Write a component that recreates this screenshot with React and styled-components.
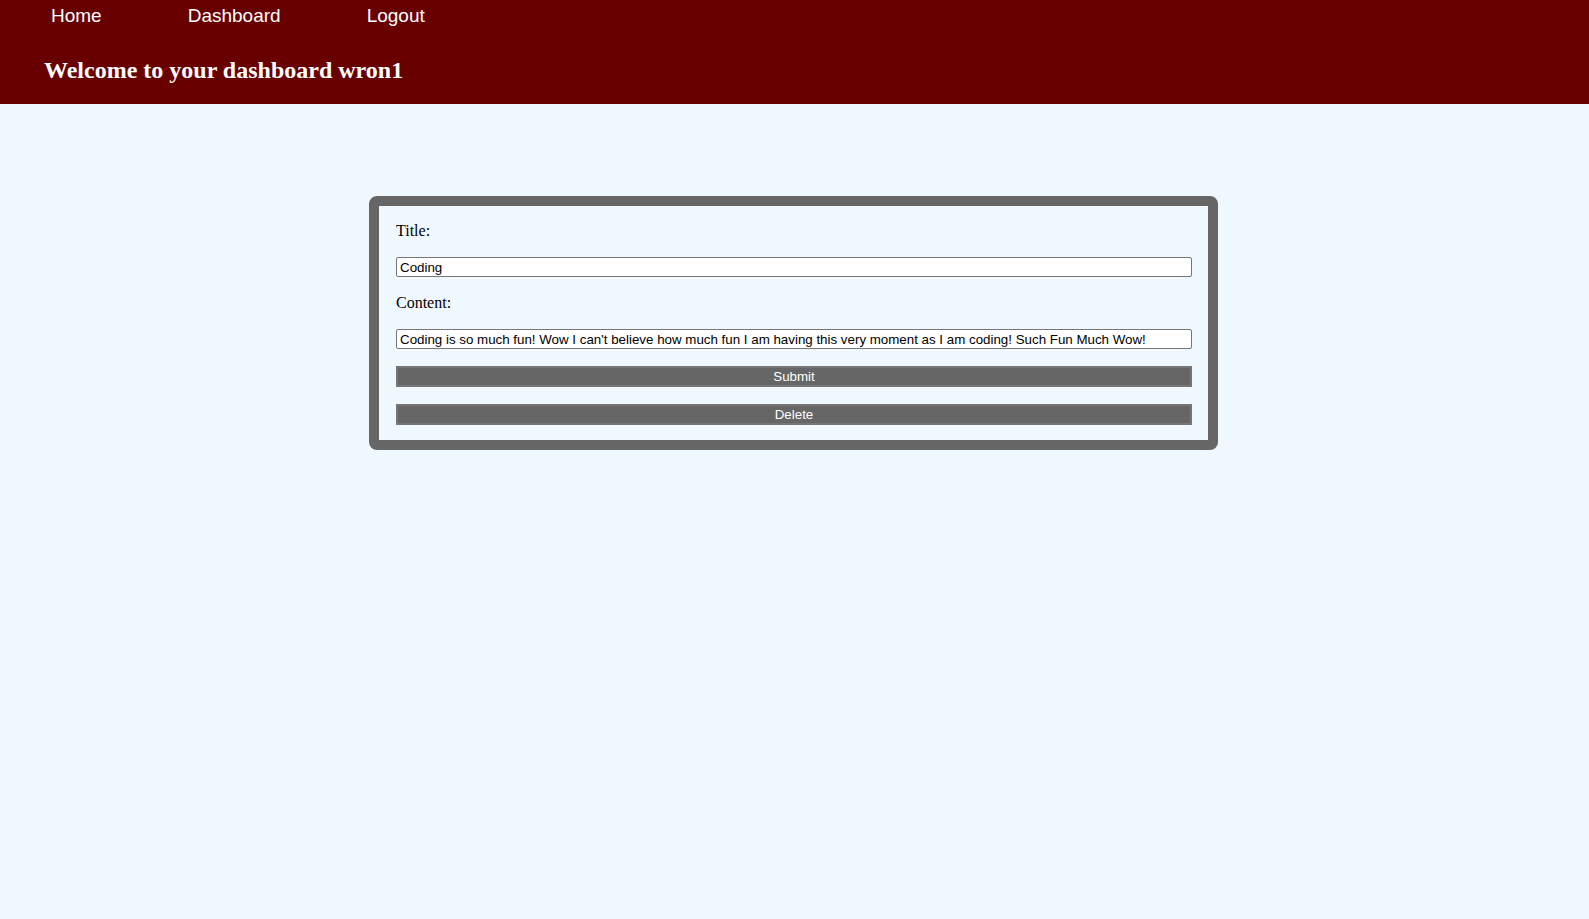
import styled, { createGlobalStyle } from 'styled-components';

const GlobalStyle = createGlobalStyle`
	html, body {
		margin: 0;
		padding: 0;
		background: #f0f8ff;
		font-family: 'Liberation Serif', 'Times New Roman', serif;
	}
	#root {
		min-height: 100vh;
	}
`;

const App = () => {
	return (
		<>
			<GlobalStyle />
			<StyledHeader>
				<StyledNav>
					<StyledLink href='#'>Home</StyledLink>
					<StyledLink href='#'>Dashboard</StyledLink>
					<StyledLink href='#'>Logout</StyledLink>
				</StyledNav>
				<StyledWelcome>Welcome to your dashboard wron1</StyledWelcome>
			</StyledHeader>
			<StyledMain>
				<StyledCard>
					<StyledLabel>Title:</StyledLabel>
					<StyledInput type='text' defaultValue='Coding' />
					<StyledLabel>Content:</StyledLabel>
					<StyledInput
						type='text'
						defaultValue="Coding is so much fun! Wow I can't believe how much fun I am having this very moment as I am coding! Such Fun Much Wow!"
					/>
					<StyledButton type='button'>Submit</StyledButton>
					<StyledButton type='button'>Delete</StyledButton>
				</StyledCard>
			</StyledMain>
		</>
	);
};

const StyledHeader = styled.header`
	background: #680000;
	padding: 5px 0 0;
	height: 99px;
`;

const StyledNav = styled.nav`
	display: flex;
	gap: 86px;
	padding-left: 51px;
	height: 22px;
`;

const StyledLink = styled.a`
	font-family: 'Liberation Sans', Arial, sans-serif;
	font-size: 19px;
	line-height: 22px;
	color: #ffffff;
	text-decoration: none;
`;

const StyledWelcome = styled.h2`
	margin: 30px 0 0 44px;
	font-size: 24px;
	font-weight: bold;
	line-height: 27px;
	color: #ffffff;
`;

const StyledMain = styled.main`
	display: flex;
	justify-content: center;
	padding-top: 92px;
	padding-right: 2px;
`;

const StyledCard = styled.form`
	display: flex;
	flex-direction: column;
	gap: 17px;
	width: 796px;
	padding: 16px 16px 15px 17px;
	border: 10px solid #666666;
	border-radius: 8px;
	background: #f0f8ff;
`;

const StyledLabel = styled.label`
	display: block;
	font-size: 16px;
	line-height: 18px;
	color: #000000;
`;

const StyledInput = styled.input`
	box-sizing: border-box;
	width: 100%;
	height: 20px;
	padding: 1px 3px;
	margin: 0;
	border: 1px solid #767676;
	border-radius: 2px;
	background: #ffffff;
	font-family: 'Liberation Sans', Arial, sans-serif;
	font-size: 13.33px;
	color: #000000;
	outline: none;
`;

const StyledButton = styled.button`
	box-sizing: border-box;
	width: 100%;
	height: 21px;
	padding: 0;
	margin: 0;
	border: 2px solid #767676;
	background: #666666;
	font-family: 'Liberation Sans', Arial, sans-serif;
	font-size: 13.33px;
	color: #ffffff;
	cursor: pointer;
`;

export default App;
